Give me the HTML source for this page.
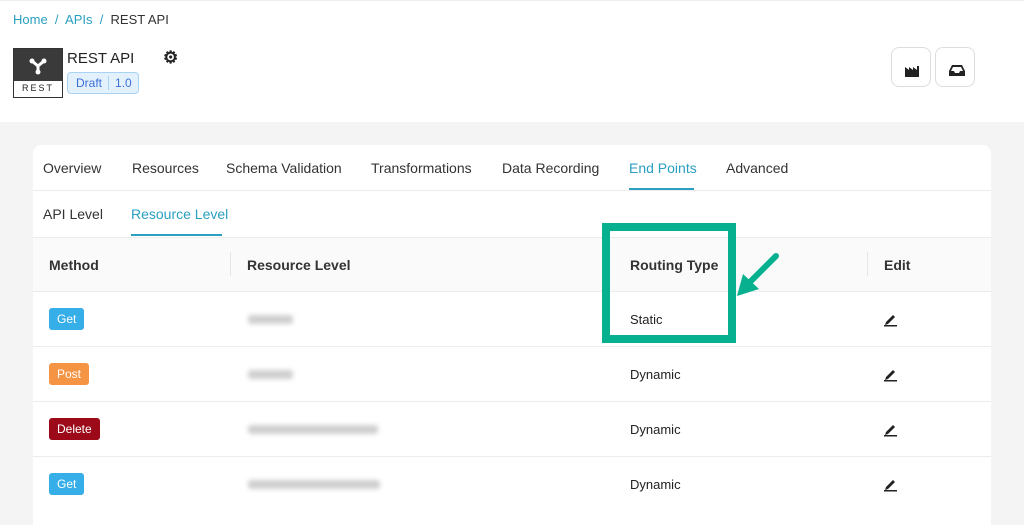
<!DOCTYPE html>
<html><head><style>
body{margin:0;width:1024px;height:508px;overflow:hidden;background:#f4f4f4;font-family:"Liberation Sans",sans-serif;color:#222;position:relative}
.top{position:absolute;left:0;top:0;width:1024px;height:121px;background:#fff;border-top:1px solid #eee}
.a{position:absolute;white-space:nowrap}
.card{position:absolute;left:33px;top:145px;width:958px;height:380px;background:#fff;border-radius:8px 8px 0 0}
.tab{position:absolute;top:160px;font-size:14px;color:#333}
.badge{position:absolute;left:49px;color:#fff;font-size:12px;padding:0 8px;height:22px;line-height:22px;border-radius:3px}
.row{position:absolute;left:33px;width:958px;height:1px;background:#ececec}
.blur{position:absolute;height:9px;background:#cfcfcf;filter:blur(2.5px);border-radius:3px}
.cell{position:absolute;font-size:13px;color:#222}
.btn{position:absolute;top:47px;width:38px;height:38px;border:1px solid #ddd;border-radius:8px;background:#fff}
</style></head><body>
<div class="top"></div>
<div class="a" style="left:13px;top:12px;font-size:13px;color:#2a9fc0">Home &nbsp;/&nbsp; APIs &nbsp;/&nbsp; <span style="color:#333">REST API</span></div>
<div class="a" style="left:13px;top:48px;width:48px;height:48px;border:1px solid #333;background:#fff">
<div style="height:32px;background:#3a3a3a;position:relative"><svg width="48" height="32" viewBox="0 0 48 32"><g stroke="#fff" stroke-width="3" stroke-linecap="round"><line x1="24" y1="17" x2="18" y2="12"/><line x1="24" y1="17" x2="30" y2="12"/><line x1="24" y1="17" x2="24" y2="23"/></g><g fill="#fff"><circle cx="18" cy="12" r="2.5"/><circle cx="30" cy="12" r="2.5"/><circle cx="24" cy="23" r="2.5"/></g></svg></div>
<div style="font-size:9px;letter-spacing:2px;text-align:center;line-height:15px">REST</div></div>
<div class="a" style="left:67px;top:50px;font-size:15px">REST API</div>
<div class="a" style="left:163px;top:48px;font-size:17px;font-weight:bold">⚙</div>
<div class="a" style="left:67px;top:72px;height:20px;border:1px solid #a9d3f5;background:#e3f1fd;border-radius:4px;font-size:12px;color:#3a6fd6;line-height:20px"><span style="padding:0 6px 0 8px;border-right:1px solid #a9d3f5">Draft</span><span style="padding:0 6px">1.0</span></div>
<div class="btn" style="left:891px"><svg width="38" height="38"><path d="M13 29V19l4 3v-3l4 3v-3l4 3v-4h2v11z" fill="#222"/></svg></div>
<div class="btn" style="left:935px"><svg width="38" height="38"><path d="M13 23l3-6h10l3 6v5H13z M15 23h3l1 2h4l1-2h3l-2-4h-8z" fill="#222" fill-rule="evenodd"/></svg></div>
<div class="card"></div>
<div class="tab" style="left:43px">Overview</div>
<div class="tab" style="left:132px">Resources</div>
<div class="tab" style="left:226px">Schema Validation</div>
<div class="tab" style="left:371px">Transformations</div>
<div class="tab" style="left:502px">Data Recording</div>
<div class="tab" style="left:629px;color:#2a9fc0">End Points</div>
<div class="tab" style="left:726px">Advanced</div>
<div class="row" style="top:190px"></div>
<div class="a" style="left:629px;top:188px;width:65px;height:2px;background:#2a9fc0"></div>
<div class="tab" style="left:43px;top:206px">API Level</div>
<div class="tab" style="left:131px;top:206px;color:#2a9fc0">Resource Level</div>
<div class="a" style="left:131px;top:234px;width:91px;height:2px;background:#2a9fc0"></div>
<div class="a" style="left:33px;top:237px;width:958px;height:54px;background:#fafafa;border-top:1px solid #ececec"></div>
<div class="a" style="left:230px;top:252px;width:1px;height:24px;background:#e6e6e6"></div>
<div class="a" style="left:867px;top:252px;width:1px;height:24px;background:#e6e6e6"></div>
<div class="cell" style="left:49px;top:257px;font-size:14px;font-weight:bold;color:#333">Method</div>
<div class="cell" style="left:247px;top:257px;font-size:14px;font-weight:bold;color:#333">Resource Level</div>
<div class="cell" style="left:630px;top:257px;font-size:14px;font-weight:bold;color:#333">Routing Type</div>
<div class="cell" style="left:884px;top:257px;font-size:14px;font-weight:bold;color:#333">Edit</div>
<div class="row" style="top:291px"></div><div class="row" style="top:346px"></div><div class="row" style="top:401px"></div><div class="row" style="top:456px"></div>
<div class="badge" style="top:308px;background:#36aee8">Get</div>
<div class="badge" style="top:363px;background:#f59443">Post</div>
<div class="badge" style="top:418px;background:#9c0a1a">Delete</div>
<div class="badge" style="top:473px;background:#36aee8">Get</div>
<div class="blur" style="left:248px;top:315px;width:45px"></div>
<div class="blur" style="left:248px;top:370px;width:45px"></div>
<div class="blur" style="left:248px;top:425px;width:130px"></div>
<div class="blur" style="left:248px;top:480px;width:132px"></div>
<div class="cell" style="left:630px;top:312px">Static</div>
<div class="cell" style="left:630px;top:367px">Dynamic</div>
<div class="cell" style="left:630px;top:422px">Dynamic</div>
<div class="cell" style="left:630px;top:477px">Dynamic</div>
<svg class="a" style="left:880px;top:308px" width="20" height="200"><g fill="#222"><path d="M6 14l7-7 2 2-7 7-3 1z M4 17h13v1.5H4z"/><path transform="translate(0,55)" d="M6 14l7-7 2 2-7 7-3 1z M4 17h13v1.5H4z"/><path transform="translate(0,110)" d="M6 14l7-7 2 2-7 7-3 1z M4 17h13v1.5H4z"/><path transform="translate(0,165)" d="M6 14l7-7 2 2-7 7-3 1z M4 17h13v1.5H4z"/></g></svg>
<div class="a" style="left:602px;top:223px;width:118px;height:104px;border:8px solid #07b08e"></div>
<svg class="a" style="left:730px;top:248px" width="56" height="56"><line x1="46" y1="8" x2="18" y2="36" stroke="#07b08e" stroke-width="6" stroke-linecap="round"/><path d="M7 48l6-22 16 15z" fill="#07b08e"/></svg>
</body></html>
